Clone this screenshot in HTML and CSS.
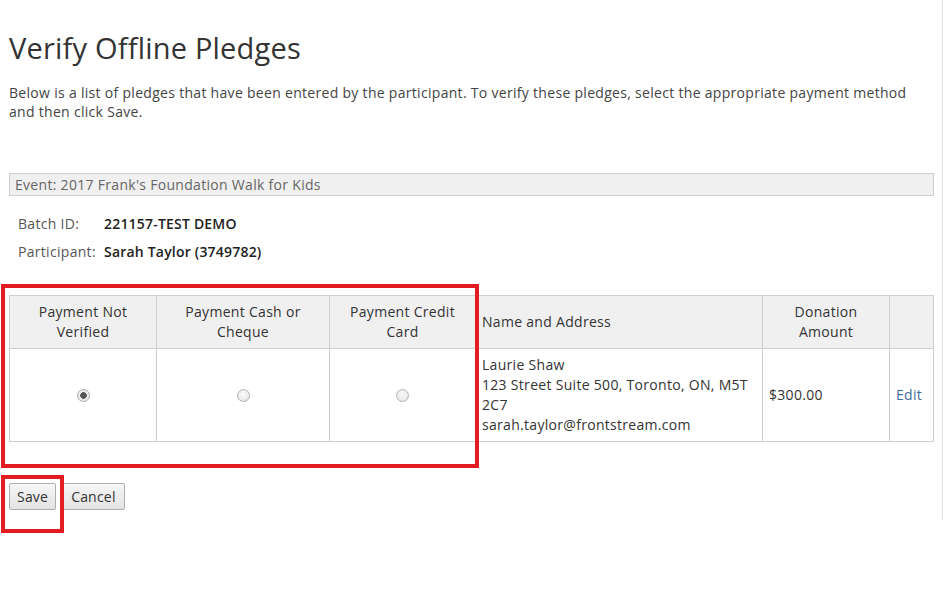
FILE: index.html
```html
<!DOCTYPE html>
<html>
<head>
<meta charset="utf-8">
<link rel="stylesheet" href="styles.css">
</head>
<body>
<div class="page">
  <h1 class="title">Verify Offline Pledges</h1>
  <p class="intro">Below is a list of pledges that have been entered by the participant. To verify these pledges, select the appropriate payment method and then click Save.</p>
  <div class="event">Event: 2017 Frank's Foundation Walk for Kids</div>
  <div class="info">
    <div class="info-row"><span class="label">Batch ID:</span><span class="value">221157-TEST DEMO</span></div>
    <div class="info-row"><span class="label">Participant:</span><span class="value">Sarah Taylor (3749782)</span></div>
  </div>
  <div class="table-wrap">
    <table class="pledges">
      <colgroup>
        <col class="c1"><col class="c2"><col class="c3"><col class="c4"><col class="c5"><col class="c6">
      </colgroup>
      <thead>
        <tr>
          <th>Payment Not<br>Verified</th>
          <th>Payment Cash or<br>Cheque</th>
          <th>Payment Credit<br>Card</th>
          <th class="left">Name and Address</th>
          <th>Donation<br>Amount</th>
          <th></th>
        </tr>
      </thead>
      <tbody>
        <tr>
          <td class="center"><span class="radio checked"></span></td>
          <td class="center"><span class="radio"></span></td>
          <td class="center"><span class="radio"></span></td>
          <td>Laurie Shaw<br>123 Street Suite 500, Toronto, ON, M5T<br>2C7<br>sarah.taylor@frontstream.com</td>
          <td>$300.00</td>
          <td><a class="edit">Edit</a></td>
        </tr>
      </tbody>
    </table>
    <div class="mark mark-table"></div>
  </div>
  <div class="actions">
    <button class="btn btn-save">Save</button>
    <button class="btn btn-cancel">Cancel</button>
    <div class="mark mark-save"></div>
  </div>
</div>
</body>
</html>
```
FILE: styles.css
```css
html, body {
  margin: 0;
  padding: 0;
  background: #fff;
}
body {
  font-family: "Open Sans", "DejaVu Sans", sans-serif;
  font-size: 14px;
  letter-spacing: 0.3px;
  color: #333;
  min-height: 591px;
}
.page {
  width: 933px;
  padding-left: 9px;
  position: relative;
}
.page::after {
  content: "";
  position: absolute;
  top: 0;
  right: -1px;
  width: 1px;
  height: 520px;
  background: #e2e2e2;
}
.title {
  margin: 0;
  padding-top: 28px;
  font-size: 29px;
  font-weight: normal;
  line-height: 40px;
  color: #333;
  letter-spacing: 0.2px;
}
.intro {
  margin: 15px 0 0 0;
  line-height: 19px;
  color: #444;
  width: 915px;
}
.event {
  margin-top: 52px;
  width: 918px;
  height: 21px;
  line-height: 21px;
  background: #f0f0f0;
  border: 1px solid #cfcfcf;
  color: #666;
  padding-left: 5px;
}
.info {
  margin-top: 14px;
  padding-left: 9px;
}
.info-row {
  display: flex;
  height: 28px;
  line-height: 28px;
  color: #555;
}
.label {
  width: 86px;
}
.value {
  color: #222;
  font-weight: 600;
  letter-spacing: 0.2px;
}
.table-wrap {
  margin-top: 29px;
  position: relative;
}
.pledges {
  border-collapse: collapse;
  width: 924px;
  table-layout: fixed;
}
.c1 { width: 147px; }
.c2 { width: 173px; }
.c3 { width: 146px; }
.c4 { width: 287px; }
.c5 { width: 127px; }
.c6 { width: 44px; }
.pledges th, .pledges td {
  border: 1px solid #cfcfcf;
  line-height: 20px;
  padding: 6px 6px;
  vertical-align: middle;
  color: #333;
}
.pledges th {
  background: #f0f0f0;
  font-weight: normal;
  text-align: center;
  height: 40px;
}
.pledges th.left { text-align: left; }
.pledges td { height: 80px; }
.pledges td.center { text-align: center; }
.radio {
  display: inline-block;
  width: 11px;
  height: 11px;
  border-radius: 50%;
  border: 1px solid #b5b5b5;
  background: radial-gradient(circle at 50% 40%, #fafafa 0%, #e2e2e2 100%);
  vertical-align: middle;
  position: relative;
  top: -1px;
}
.radio.checked {
  background: radial-gradient(circle, #555 0, #555 3px, #e8e8e8 3.6px, #f5f5f5 100%);
  border-color: #a8a8a8;
}
.edit {
  color: #3f6d9b;
  text-decoration: none;
}
.mark {
  position: absolute;
  border: 4px solid #e31c23;
  box-sizing: border-box;
  pointer-events: none;
}
.mark-table {
  left: -8px;
  top: -11px;
  width: 478px;
  height: 184px;
}
.actions {
  margin-top: 41px;
  position: relative;
  display: flex;
  gap: 6px;
}
.btn {
  font-family: "Open Sans", "DejaVu Sans", sans-serif;
  font-size: 14px;
  letter-spacing: 0.2px;
  color: #333;
  height: 27px;
  padding: 0 7px;
  border: 1px solid #adadad;
  border-radius: 2px;
  background: linear-gradient(#f6f6f6, #e3e3e3);
  line-height: 23px;
}
.btn-cancel {
  padding: 0 8px;
}
.mark-save {
  left: -8px;
  top: -8px;
  width: 63px;
  height: 58px;
}
```
